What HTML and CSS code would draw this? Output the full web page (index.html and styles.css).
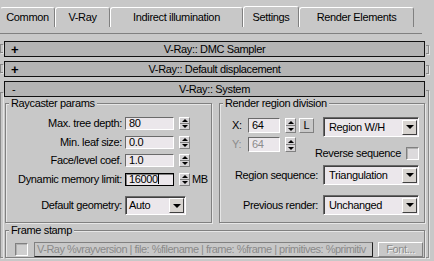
FILE: index.html
```html
<!DOCTYPE html>
<html>
<head>
<meta charset="utf-8">
<link rel="stylesheet" href="styles.css">
</head>
<body>
	<div class="tabs">
		<div class="tab w-common">Common</div>
		<div class="tab w-vray">V-Ray</div>
		<div class="tab w-gi">Indirect illumination</div>
		<div class="tab w-settings on">Settings</div>
		<div class="tab w-elements">Render Elements</div>
	</div>

	<div class="rollouts">
		<div class="rollout">
			<span class="brk brk-l"></span>
			<div class="roll-main">
				<div class="roll-bar"><b class="sign">+</b><span class="roll-title">V-Ray:: DMC Sampler</span></div>
			</div>
			<span class="brk brk-r"></span>
		</div>
		<div class="rollout">
			<span class="brk brk-l"></span>
			<div class="roll-main">
				<div class="roll-bar"><b class="sign">+</b><span class="roll-title">V-Ray:: Default displacement</span></div>
			</div>
			<span class="brk brk-r"></span>
		</div>
		<div class="rollout open">
			<span class="brk brk-l"></span>
			<div class="roll-main">
				<div class="roll-bar"><span class="sign minus">-</span><span class="roll-title">V-Ray:: System</span></div>

				<div class="sys-top">
					<!-- raycaster -->
					<fieldset class="grp">
						<legend>Raycaster params</legend>
						<div class="ray-grid">
							<label class="lbl">Max. tree depth:</label>
							<span class="fld">80</span>
							<span class="spin"><i class="up"></i><i class="dn"></i></span>
							<span></span>

							<label class="lbl">Min. leaf size:</label>
							<span class="fld">0.0</span>
							<span class="spin"><i class="up"></i><i class="dn"></i></span>
							<span></span>

							<label class="lbl">Face/level coef.</label>
							<span class="fld">1.0</span>
							<span class="spin"><i class="up"></i><i class="dn"></i></span>
							<span></span>

							<label class="lbl">Dynamic memory limit:</label>
							<span class="fld focus">16000<span class="caret"></span></span>
							<span class="spin"><i class="up"></i><i class="dn"></i></span>
							<span class="unit">MB</span>

							<label class="lbl lbl-geo">Default geometry:</label>
							<div class="combo combo-geo">Auto<span class="arr"></span></div>
						</div>
					</fieldset>

					<!-- render region -->
					<fieldset class="grp">
						<legend>Render region division</legend>
						<div class="rr-grid">
							<div class="xy">
								<div class="xy-row">
									<span class="xy-lbl">X:</span>
									<span class="fld fld-xy">64</span>
									<span class="spin spin-xy"><i class="up"></i><i class="dn"></i></span>
									<span class="btn-l">L</span>
								</div>
								<div class="xy-row off">
									<span class="xy-lbl">Y:</span>
									<span class="fld fld-xy">64</span>
									<span class="spin spin-xy"><i class="up"></i><i class="dn"></i></span>
								</div>
							</div>
							<div class="combo combo-rr">Region W/H<span class="arr"></span></div>
							<div class="rev">Reverse sequence<span class="chk"></span></div>
							<label class="rr-lbl row3">Region sequence:</label>
							<div class="combo combo-rr row3">Triangulation<span class="arr"></span></div>
							<label class="rr-lbl row4">Previous render:</label>
							<div class="combo combo-rr row4">Unchanged<span class="arr"></span></div>
						</div>
					</fieldset>
				</div>

				<fieldset class="grp stamp">
					<legend>Frame stamp</legend>
					<div class="stamp-row">
						<span class="chk chk-off"></span>
						<span class="stamp-fld">V-Ray %vrayversion | file: %filename | frame: %frame | primitives: %primitiv</span>
						<span class="btn-font">Font...</span>
					</div>
				</fieldset>
			</div>
			<span class="brk brk-r"></span>
		</div>
	</div>
</body>
</html>
```

FILE: styles.css
```css
body { margin:0; background:#c8c8c8; color:#000; font:11px/13px "Liberation Sans", Arial, sans-serif; letter-spacing:-0.35px; width:434px; height:261px; overflow:hidden; }

/* tabs */
.tabs { display:flex; align-items:flex-end; width:422px; height:27px; padding-bottom:6px; border-bottom:1px solid #808080; }
.tab { box-sizing:border-box; height:20px; display:flex; align-items:center; justify-content:center; border:1px solid #808080; border-color:#fff #808080 transparent #fff; border-bottom:0; border-radius:3px 3px 0 0; }
.tab.on { height:21px; }
.w-common { width:55px; border-left-color:transparent; }
.w-vray { width:55px; }
.w-gi { width:133px; }
.w-settings { width:56px; }
.w-elements { width:115px; }

/* rollouts */
.rollouts { margin-top:7px; }
.rollout { display:flex; gap:1px; margin-bottom:4px; }
.roll-main { width:421px; }
.brk { box-sizing:border-box; width:3px; height:9px; margin-top:3px; border:1px solid #8a8a8a; box-shadow:1px 1px 0 #e4e4e4; }
.brk-l { border-right:0; }
.brk-r { border-left:0; margin-top:4px; }
.rollout.open .brk { height:auto; margin-top:11px; }
.rollout.open .brk-r { margin-top:9px; }

.roll-bar { box-sizing:border-box; height:16px; border:1px solid #111; background:#b4b4b4; display:grid; grid-template-columns:1fr auto 1fr; align-items:center; }
.sign { padding-left:6px; font-size:13px; }
.sign.minus { padding-left:7px; font-size:11px; }
.roll-title { white-space:nowrap; }

/* groups */
.sys-top { display:grid; grid-template-columns:207px 206px; column-gap:7px; padding-left:1px; }
.grp { margin:0; padding:0; min-width:0; border:1px solid #808080; box-shadow:inset 1px 1px 0 #e6e6e6, 1px 1px 0 #e6e6e6; }
.grp legend { margin-left:3px; padding:0 2px; background:#c8c8c8; }

/* raycaster */
.ray-grid { display:grid; grid-template-columns:119px 54px 13px auto; grid-template-rows:13px 13px 13px 13px 24px; row-gap:5.5px; margin:7px 0 0; }
.lbl { display:flex; align-items:center; justify-content:flex-end; padding-right:3px; white-space:nowrap; }
.lbl-geo { align-self:end; height:19px; }
.unit { display:flex; align-items:center; }

.fld { box-sizing:border-box; width:49px; height:13px; background:#ebe7eb; border:1px solid; border-color:#6a6a6a #fff #fff #6a6a6a; padding-left:3px; line-height:11px; display:flex; align-items:center; white-space:nowrap; overflow:hidden; }
.fld.focus { border-color:#000; box-shadow:inset 1px 1px 0 #808080; }
.caret { display:inline-block; width:1px; height:10px; background:#000; }

.spin { box-sizing:border-box; width:11px; height:13px; display:flex; flex-direction:column; border:1px solid #808080; border-top-color:#fff; border-left-color:#fff; }
.spin i { flex:1; display:flex; align-items:center; justify-content:center; background:#d6d4d6; }
.spin .up { border-bottom:1px solid #808080; }
.spin .up::after { content:""; border-left:3px solid transparent; border-right:3px solid transparent; border-bottom:3px solid #000; }
.spin .dn::after { content:""; border-left:3px solid transparent; border-right:3px solid transparent; border-top:3px solid #000; }

.combo { box-sizing:border-box; height:20px; background:#ebe7eb; border:1px solid; border-color:#6a6a6a #fff #fff #6a6a6a; box-shadow:inset 1px 1px 0 #404040; display:flex; align-items:center; justify-content:space-between; padding:0 1px 0 5px; white-space:nowrap; }
.combo-geo { width:61px; height:19px; grid-column:2 / 5; align-self:end; padding-left:3px; }
.arr { box-sizing:border-box; width:15px; height:15px; background:#d8d4d0; border:1px solid; border-color:#fff #404040 #404040 #fff; display:flex; align-items:center; justify-content:center; }
.arr::after { content:""; border-left:4px solid transparent; border-right:4px solid transparent; border-top:4px solid #000; }

/* render region */
.rr-grid { display:grid; grid-template-columns:89px 96px; grid-template-rows:20px 23px 25px 30px; column-gap:2px; margin:7px 5px 7px 12px; }
.xy { grid-column:1; grid-row:1 / 3; display:flex; flex-direction:column; gap:4px; margin-top:1px; }
.xy-row { display:flex; align-items:center; }
.xy-lbl { width:16px; }
.fld-xy { width:32px; height:15px; }
.spin-xy { height:15px; margin-left:5px; }
.btn-l { box-sizing:border-box; width:15px; height:15px; margin-left:3px; border:1px solid; border-color:#fff #808080 #808080 #fff; display:flex; align-items:center; justify-content:center; }
.xy-row.off { color:#8c8c8c; }
.combo-rr { grid-column:2; grid-row:1; }
.rev { grid-column:1 / 3; grid-row:2; justify-self:end; align-self:end; display:flex; align-items:center; gap:5px; white-space:nowrap; }
.chk { box-sizing:border-box; display:inline-block; width:13px; height:13px; background:#dcdadc; border:1px solid; border-color:#808080 #fff #fff #808080; box-shadow:inset 1px 1px 0 #b0b0b0; }
.rr-lbl { grid-column:1; justify-self:end; align-self:end; height:20px; display:flex; align-items:center; padding-right:3px; white-space:nowrap; }
.combo-rr.row3, .combo-rr.row4 { align-self:end; }
.row3 { grid-row:3; }
.row4 { grid-row:4; }

/* frame stamp */
.stamp { margin:1px 0 0 1px; width:418px; }
.stamp-row { display:flex; align-items:center; margin:5px 1px 0 9px; }
.chk-off { background:#cfcfcf; }
.stamp-fld { box-sizing:border-box; width:339px; flex-shrink:0; height:15px; margin-left:6px; border:1px solid; border-color:#808080 #202020 #202020 #808080; color:#8a8a8a; padding-left:2px; letter-spacing:-0.5px; white-space:nowrap; overflow:hidden; display:flex; align-items:center; }
.btn-font { box-sizing:border-box; width:45px; flex-shrink:0; height:15px; margin-left:5px; border:1px solid; border-color:#fff #808080 #808080 #fff; color:#8c8c8c; text-shadow:1px 1px 0 #f0f0f0; display:flex; align-items:center; justify-content:center; }
```
